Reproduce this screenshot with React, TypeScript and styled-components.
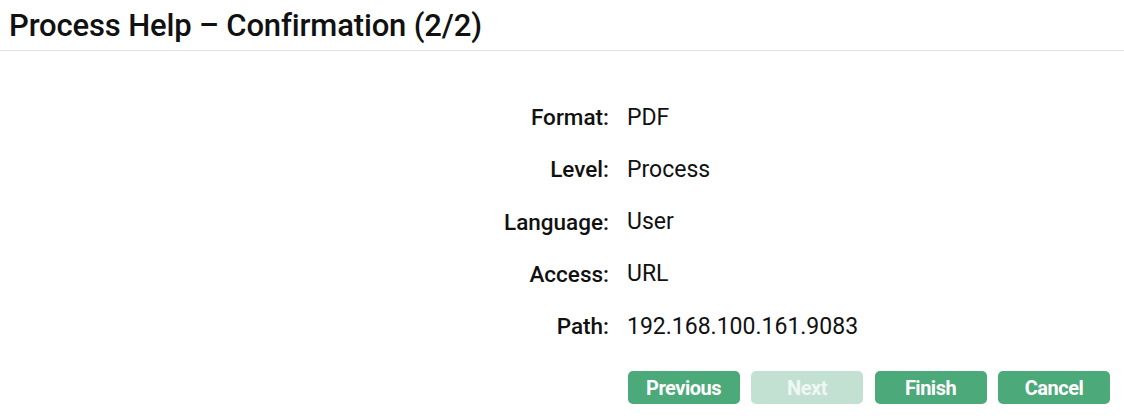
import React from "react";
import styled, { createGlobalStyle } from "styled-components";

const Global = createGlobalStyle`
  html, body { margin: 0; padding: 0; background: #fff; }
  body { font-family: Roboto, "Noto Sans", sans-serif; color: #111; }
`;

const Page = styled.div`
  width: 1124px;
  height: 418px;
  display: flex;
  flex-direction: column;
  overflow: hidden;
`;

const Header = styled.header`
  height: 51px;
  box-sizing: border-box;
  border-bottom: 1px solid #e2e2e2;
  display: flex;
  align-items: center;
  padding-left: 9px;
`;

const Title = styled.h1`
  margin: 0;
  font-size: 31px;
  font-weight: 500;
  letter-spacing: -0.15px;
  color: #111;
`;

const Body = styled.main`
  flex: 1;
  display: flex;
  flex-direction: column;
  padding: 40px 14px 0 0;
`;

const Form = styled.dl`
  margin: 0;
  display: grid;
  grid-template-columns: 609px auto;
  column-gap: 18px;
  grid-auto-rows: 52.25px;
  align-items: center;
`;

const Label = styled.dt`
  text-align: right;
  font-size: 22.5px;
  font-weight: 500;
`;

const Value = styled.dd`
  margin: 0;
  font-size: 23px;
  font-weight: 400;
`;

const Actions = styled.div`
  display: flex;
  justify-content: flex-end;
  gap: 11.5px;
  margin-top: 19px;
`;

const Button = styled.button<{ $disabled?: boolean }>`
  width: 112px;
  height: 33px;
  border: none;
  border-radius: 5px;
  background: ${(p) => (p.$disabled ? "#c3e1d2" : "#4ca97a")};
  color: ${(p) => (p.$disabled ? "#eef7f2" : "#fff")};
  font-family: Roboto, "Noto Sans", sans-serif;
  font-size: 20px;
  font-weight: 700;
  letter-spacing: -0.5px;
  cursor: ${(p) => (p.$disabled ? "default" : "pointer")};
  padding: 0;
`;

const rows: [string, string][] = [
  ["Format:", "PDF"],
  ["Level:", "Process"],
  ["Language:", "User"],
  ["Access:", "URL"],
  ["Path:", "192.168.100.161.9083"],
];

export default function App() {
  return (
    <Page>
      <Global />
      <Header>
        <Title>Process Help – Confirmation (2/2)</Title>
      </Header>
      <Body>
        <Form>
          {rows.map(([l, v]) => (
            <React.Fragment key={l}>
              <Label>{l}</Label>
              <Value>{v}</Value>
            </React.Fragment>
          ))}
        </Form>
        <Actions>
          <Button>Previous</Button>
          <Button $disabled disabled>Next</Button>
          <Button>Finish</Button>
          <Button>Cancel</Button>
        </Actions>
      </Body>
    </Page>
  );
}
